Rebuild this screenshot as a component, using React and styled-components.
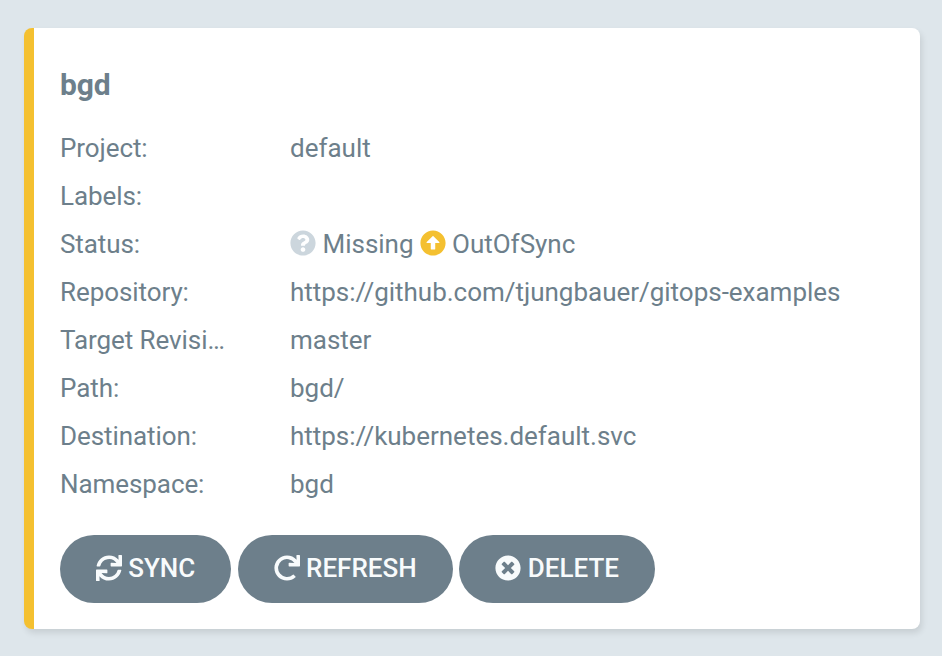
import React from 'react';
import styled, { createGlobalStyle } from 'styled-components';
import { FaQuestionCircle, FaArrowAltCircleUp, FaTimesCircle, FaRedo, FaSync } from 'react-icons/fa';

const GlobalStyle = createGlobalStyle`
  * { box-sizing: border-box; }
  body { margin: 0; background: #dee6eb; font-family: Roboto, sans-serif; color: #6d7f8b; }
`;

const Page = styled.main`
  height: 656px;
  padding: 28px 22px 27px 24px;
`;

const Card = styled.article`
  height: 601px;
  padding: 36px 26px 26px;
  background: #fff;
  border-left: 10px solid #f4c030;
  border-radius: 8px;
  box-shadow: 2px 4px 6px rgba(0, 0, 0, 0.1);
`;

const Title = styled.h1`
  margin: 0 0 18px;
  font-size: 30px;
  line-height: 42px;
  font-weight: 700;
  letter-spacing: -0.1px;
`;

const Details = styled.dl`
  display: grid;
  grid-template-columns: 166px 1fr;
  column-gap: 64px;
  grid-auto-rows: 48px;
  margin: 0;
  font-size: 26px;
  line-height: 48px;
  letter-spacing: -0.015px;
`;

const Label = styled.dt`
  overflow: hidden;
  white-space: nowrap;
  text-overflow: ellipsis;
  letter-spacing: -0.08px;
`;

const Value = styled.dd`
  display: flex;
  align-items: center;
  margin: 0;
  white-space: nowrap;
`;

const Status = styled.span`
  display: flex;
  align-items: center;
  gap: 6.5px;
  margin-right: 6px;
  svg { color: ${(p) => p.$color}; margin-bottom: 2px; }
`;

const Actions = styled.div`
  display: flex;
  gap: 6.6px;
  margin-top: 27px;
`;

const Button = styled.button`
  display: flex;
  align-items: center;
  justify-content: center;
  gap: 6.5px;
  width: ${(p) => p.$width}px;
  height: 68px;
  padding: 0 0 2px;
  border: 0;
  border-radius: 34px;
  background: #6d7f8b;
  color: #f8fbfc;
  font: 500 26px/66px Roboto, sans-serif;
  svg { margin-bottom: 1px; }
`;

const rows = [
  ['Project:', 'default'],
  ['Labels:', ''],
  ['Status:', null],
  ['Repository:', 'https://github.com/tjungbauer/gitops-examples'],
  ['Target Revision:', 'master'],
  ['Path:', 'bgd/'],
  ['Destination:', 'https://kubernetes.default.svc'],
  ['Namespace:', 'bgd'],
];

export default function App() {
  return (
    <Page>
      <GlobalStyle />
      <Card>
        <Title>bgd</Title>
        <Details>
          {rows.map(([label, value]) => (
            <React.Fragment key={label}>
              <Label>{label}</Label>
              <Value>
                {value ?? (
                  <>
                    <Status $color="#ccd6dd"><FaQuestionCircle size={26} />Missing</Status>
                    <Status $color="#f4c030"><FaArrowAltCircleUp size={26} />OutOfSync</Status>
                  </>
                )}
              </Value>
            </React.Fragment>
          ))}
        </Details>
        <Actions>
          <Button $width={171}><FaSync size={26} />SYNC</Button>
          <Button $width={215}><FaRedo size={26} />REFRESH</Button>
          <Button $width={196}><FaTimesCircle size={26} />DELETE</Button>
        </Actions>
      </Card>
    </Page>
  );
}
